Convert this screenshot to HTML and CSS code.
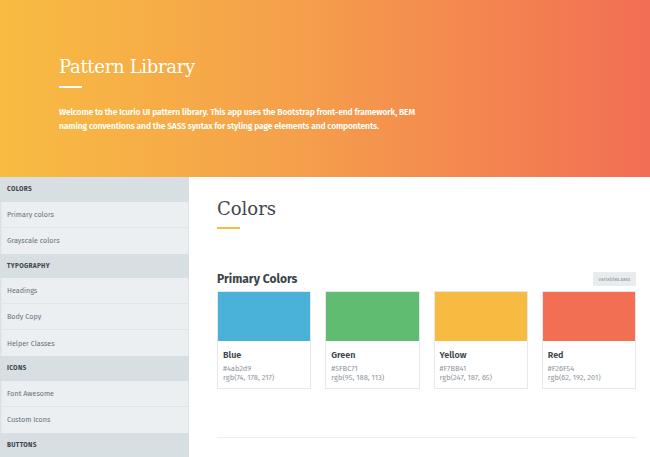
FILE: index.html
```html
<!DOCTYPE html>
<html lang="en">
<head>
<meta charset="utf-8">
<title>Pattern Library</title>
<link rel="stylesheet" href="styles.css">
</head>
<body>
<header class="hero">
  <h1 class="hero__title">Pattern Library</h1>
  <span class="hero__rule"></span>
  <p class="hero__text">Welcome to the Icurio UI pattern library. This app uses the Bootstrap front-end framework, BEM naming conventions and the SASS syntax for styling page elements and compontents.</p>
</header>
<div class="layout">
  <nav class="sidebar">
    <div class="sidebar__head">Colors</div>
    <a class="sidebar__item">Primary colors</a>
    <a class="sidebar__item">Grayscale colors</a>
    <div class="sidebar__head">Typography</div>
    <a class="sidebar__item">Headings</a>
    <a class="sidebar__item">Body Copy</a>
    <a class="sidebar__item">Helper Classes</a>
    <div class="sidebar__head">Icons</div>
    <a class="sidebar__item">Font Awesome</a>
    <a class="sidebar__item">Custom Icons</a>
    <div class="sidebar__head">Buttons</div>
  </nav>
  <main class="content">
    <h2 class="content__title">Colors</h2>
    <span class="content__rule"></span>
    <div class="section__head">
      <h3 class="section__title">Primary Colors</h3>
      <span class="badge">variables.sass</span>
    </div>
    <div class="swatches">
      <div class="swatch">
        <div class="swatch__color swatch__color--blue"></div>
        <div class="swatch__body">
          <div class="swatch__name">Blue</div>
          <div class="swatch__code">#4ab2d9</div>
          <div class="swatch__code">rgb(74, 178, 217)</div>
        </div>
      </div>
      <div class="swatch">
        <div class="swatch__color swatch__color--green"></div>
        <div class="swatch__body">
          <div class="swatch__name">Green</div>
          <div class="swatch__code">#5FBC71</div>
          <div class="swatch__code">rgb(95, 188, 113)</div>
        </div>
      </div>
      <div class="swatch">
        <div class="swatch__color swatch__color--yellow"></div>
        <div class="swatch__body">
          <div class="swatch__name">Yellow</div>
          <div class="swatch__code">#F7BB41</div>
          <div class="swatch__code">rgb(247, 187, 65)</div>
        </div>
      </div>
      <div class="swatch">
        <div class="swatch__color swatch__color--red"></div>
        <div class="swatch__body">
          <div class="swatch__name">Red</div>
          <div class="swatch__code">#F26F54</div>
          <div class="swatch__code">rgb(62, 192, 201)</div>
        </div>
      </div>
    </div>
    <hr class="divider">
  </main>
</div>
</body>
</html>
```
FILE: styles.css
```css
* { box-sizing: border-box; }
html, body { margin: 0; padding: 0; }
body {
  width: 650px;
  height: 457px;
  overflow: hidden;
  font-family: "Fira Sans", "Open Sans", "Noto Sans", sans-serif;
  background: #fff;
}
.hero {
  height: 177px;
  padding: 53px 0 0 59px;
  background: linear-gradient(90deg, #f8bc42 0%, #f5a04b 45%, #f26e54 100%);
  color: #fff;
}
.hero__title {
  margin: 0;
  font-family: "DejaVu Serif", serif;
  font-weight: normal;
  font-size: 18px;
  line-height: 28px;
  letter-spacing: -0.3px;
}
.hero__rule {
  display: block;
  width: 23px;
  height: 2px;
  background: #fff;
  margin-top: 5px;
}
.hero__text {
  margin: 18px 0 0;
  width: 380px;
  font-size: 8.5px;
  line-height: 13.5px;
  font-weight: 600;
  letter-spacing: -0.13px;
}
.layout {
  display: flex;
  height: 280px;
}
.sidebar {
  width: 189px;
  flex: none;
  background: #ebeff2;
  box-shadow: inset -1px 0 0 #dfe4e7, inset 2px 0 2px -1px #d5dbdf;
}
.sidebar__head {
  height: 24.5px;
  padding-left: 7px;
  display: flex;
  align-items: center;
  background: #d8dfe2;
  color: #3e464c;
  font-size: 6.5px;
  font-weight: 700;
  text-transform: uppercase;
  letter-spacing: 0.3px;
}
.sidebar__item {
  display: flex;
  align-items: center;
  height: 26px;
  padding-left: 7px;
  border-bottom: 1px solid #e0e5e8;
  color: #68727a;
  font-size: 7.2px;
}
.sidebar__item:has(+ .sidebar__head) { border-bottom: none; }
.content {
  flex: 1;
  padding: 20px 14px 0 28px;
}
.content__title {
  margin: 0;
  font-family: "DejaVu Serif", serif;
  font-weight: normal;
  font-size: 18px;
  line-height: 24px;
  color: #3f474d;
}
.content__rule {
  display: block;
  width: 23px;
  height: 2px;
  background: #f7bb41;
  margin-top: 6px;
}
.section__head {
  display: flex;
  justify-content: space-between;
  align-items: center;
  margin-top: 42px;
}
.section__title {
  margin: 0;
  font-size: 12px;
  font-weight: 700;
  color: #3b4449;
  line-height: 16px;
}
.badge {
  background: #e8ecef;
  color: #8b949a;
  font-size: 5px;
  padding: 4px 6px;
  border-radius: 1px;
}
.swatches {
  display: grid;
  grid-template-columns: repeat(4, 1fr);
  gap: 14px;
  margin-top: 4px;
}
.swatch {
  border: 1px solid #e6e9eb;
  background: #fff;
  height: 98px;
}
.swatch__color { height: 49px; }
.swatch__color--blue { background: #4ab2d9; }
.swatch__color--green { background: #5fbc71; }
.swatch__color--yellow { background: #f7bb41; }
.swatch__color--red { background: #f26f54; }
.swatch__body {
  padding: 8px 5px 0;
}
.swatch__name {
  font-size: 9px;
  font-weight: 600;
  color: #3b4449;
  line-height: 12px;
  margin-bottom: 3px;
}
.swatch__code {
  font-size: 7.5px;
  color: #8d959b;
  line-height: 9px;
}
.divider {
  margin: 48px 0 0;
  border: none;
  border-top: 1px solid #eceef0;
}
```
